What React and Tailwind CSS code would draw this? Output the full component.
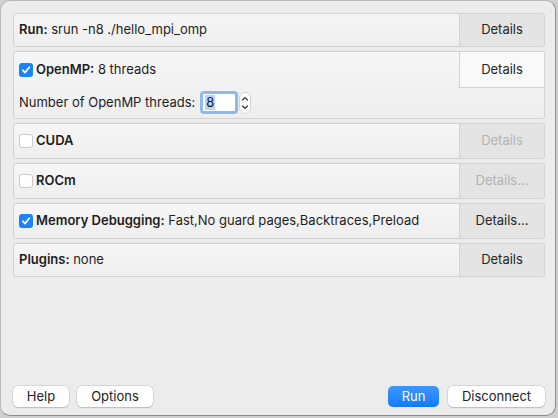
import { useState } from "react";

// small checkbox in the macOS style
function Check({ checked }) {
  if (checked) {
    return (
      <span className="flex items-center justify-center w-[14px] h-[14px] rounded-[3px] bg-[#1a82fb] shrink-0">
        <svg width="10" height="10" viewBox="0 0 10 10">
          <path d="M1.8 5.2 L4 7.6 L8.3 2.2" fill="none" stroke="white" strokeWidth="1.7" strokeLinecap="round" strokeLinejoin="round" />
        </svg>
      </span>
    );
  }
  return <span className="w-[14px] h-[14px] rounded-[3px] bg-white border border-[#c9c9c9] shrink-0" />;
}

function Row({ children, label = "Details", disabled, tall }) {
  return (
    <div className="flex items-stretch border border-[#d2d2d2] rounded-[3px] bg-gradient-to-b from-[#f6f6f6] to-[#eeeeee] overflow-hidden">
      <div className={"flex-1 flex items-center gap-[3px] pl-[5px] " + (tall ? "h-[34px]" : "h-[32px]")}>{children}</div>
      <div
        className={
          "w-[85px] shrink-0 flex items-center justify-center border-l border-[#d3d3d3] bg-[#e4e4e4] " +
          (disabled ? "text-[#b3b3b3]" : "text-[#262626]")
        }
      >
        {label}
      </div>
    </div>
  );
}

export default function App() {
  const [threads] = useState("8");
  return (
    <div className="w-[558px] h-[418px] bg-[#cfcfcf]" style={{ fontFamily: 'Inter, "Liberation Sans", sans-serif' }}>
      <div className="w-[556px] h-[416px] rounded-[10px] bg-[#ececec] border border-[#b9b9b9] border-r-[#8c8c8c] border-b-[#8c8c8c] flex flex-col pl-[12px] pr-[10px] pt-[12px] pb-[8px] text-[13px] text-[#1e1e1e]">
        <div className="flex flex-col gap-[4px]">
          <Row>
            <span><b className="font-semibold">Run:</b> srun -n8 ./hello_mpi_omp</span>
          </Row>

          <div className="flex flex-col border border-[#d2d2d2] rounded-[3px] bg-gradient-to-b from-[#f6f6f6] to-[#eeeeee] overflow-hidden">
            <div className="flex items-start">
              <div className="flex-1 h-[35px] flex items-center gap-[3px] pl-[5px]">
                <Check checked />
                <span><b className="font-semibold">OpenMP:</b> 8 threads</span>
              </div>
              <div className="w-[85px] h-[36px] shrink-0 flex items-center justify-center border-l border-b border-[#d3d3d3] bg-[#f9f9f9] text-[#262626]">
                Details
              </div>
            </div>
            <div className="h-[30px] flex items-center pl-[5px] pb-[1px]">
              <span>Number of OpenMP threads:</span>
              <div className="ml-[5px] flex items-center">
                <div className="w-[38px] h-[23px] rounded-[4px] border-[3px] border-[#8fb8f0] bg-white flex items-center pl-[2px]">
                  <span className="bg-[#b3d4fc] leading-[15px] px-[1px]">{threads}</span>
                </div>
                <svg width="12" height="22" viewBox="0 0 12 22" className="ml-[1px]">
                  <rect x="0.5" y="0.5" width="11" height="21" rx="5.5" fill="white" stroke="#d0d0d0" />
                  <path d="M3.5 8 L6 5.5 L8.5 8" fill="none" stroke="#333" strokeWidth="1.2" strokeLinecap="round" />
                  <path d="M3.5 14 L6 16.5 L8.5 14" fill="none" stroke="#333" strokeWidth="1.2" strokeLinecap="round" />
                </svg>
              </div>
            </div>
          </div>

          <Row disabled tall>
            <Check />
            <b className="font-semibold">CUDA</b>
          </Row>
          <Row disabled tall label="Details...">
            <Check />
            <b className="font-semibold">ROCm</b>
          </Row>
          <Row tall label="Details...">
            <Check checked />
            <span><b className="font-semibold">Memory Debugging:</b> Fast,No guard pages,Backtraces,Preload</span>
          </Row>
          <Row>
            <span><b className="font-semibold">Plugins:</b> none</span>
          </Row>
        </div>

        <div className="flex-1" />

        <div className="flex items-center">
          <button className="w-[56px] h-[21px] rounded-[5px] bg-white shadow-[0_0_0_0.5px_rgba(0,0,0,0.18),0_1px_1px_rgba(0,0,0,0.12)] text-[#222]">Help</button>
          <button className="ml-[8px] w-[76px] h-[21px] rounded-[5px] bg-white shadow-[0_0_0_0.5px_rgba(0,0,0,0.18),0_1px_1px_rgba(0,0,0,0.12)] text-[#222]">Options</button>
          <div className="flex-1" />
          <button className="w-[51px] h-[21px] rounded-[5px] bg-gradient-to-b from-[#3d97fd] to-[#0a7cfb] text-white">Run</button>
          <button className="ml-[9px] w-[97px] h-[21px] rounded-[5px] bg-white shadow-[0_0_0_0.5px_rgba(0,0,0,0.18),0_1px_1px_rgba(0,0,0,0.12)] text-[#222]">Disconnect</button>
        </div>
      </div>
    </div>
  );
}
